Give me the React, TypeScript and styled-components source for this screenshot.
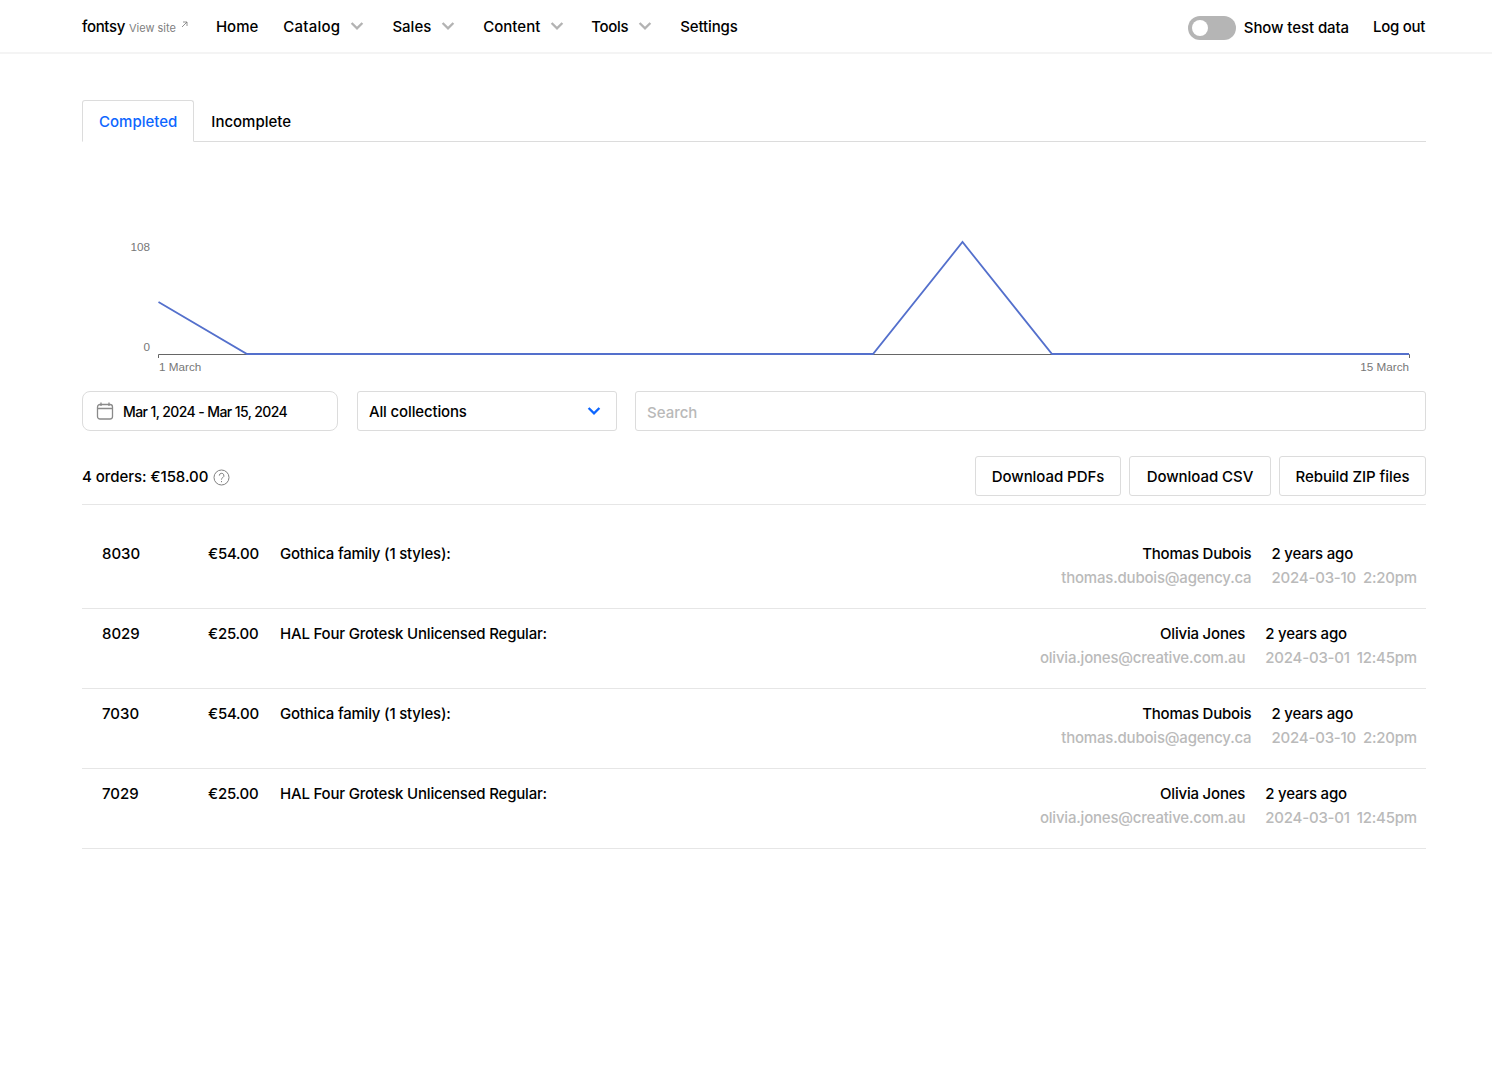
import React from "react";
import styled, { createGlobalStyle } from "styled-components";

const Global = createGlobalStyle`
  html, body { margin: 0; padding: 0; background: #fff; }
  body { font-family: "Inter", "Noto Sans", sans-serif; color: #000; font-size: 15px; font-weight: 500; }
  * { box-sizing: border-box; }
`;

const Header = styled.header`
  height: 54px;
  border-bottom: 2px solid #f4f4f4;
  padding: 0 67px 0 82px;
  display: flex;
  align-items: center;
  justify-content: space-between;
`;
const Nav = styled.nav`
  display: flex;
  align-items: center;
`;
const Brand = styled.span`
  display: flex;
  align-items: baseline;
  gap: 4px;
  margin-right: 28px;
  letter-spacing: -0.35px;
`;
const ViewSite = styled.span`
  font-size: 11px;
  font-weight: 400;
  color: #808080;
  letter-spacing: 0;
  display: inline-flex;
  gap: 5px;
`;
const NavItem = styled.span<{ $gap?: number; $ls?: number }>`
  display: flex;
  align-items: center;
  margin-right: ${(p) => p.$gap ?? 24}px;
  letter-spacing: ${(p) => p.$ls ?? 0}px;
  gap: 10px;
`;
const RightNav = styled.div`
  display: flex;
  align-items: center;
`;
const Toggle = styled.span`
  width: 48px;
  height: 24px;
  border-radius: 12px;
  background: #b5b5b5;
  padding: 4px;
  margin: 4px 8px 0 0;
  display: block;
`;
const Knob = styled.span`
  display: block;
  width: 16px;
  height: 16px;
  border-radius: 50%;
  background: #fff;
`;
const ToggleLabel = styled.span`
  margin: 2px 24px 0 0;
  letter-spacing: -0.08px;
`;
const LogOut = styled.span`
  letter-spacing: -0.3px;
`;
const Main = styled.main`
  padding: 46px 66px 0 82px;
`;
const Tabs = styled.div`
  display: flex;
  height: 42px;
  border-bottom: 1px solid #dcdcdc;
`;
const Tab = styled.div<{ $active?: boolean }>`
  height: 42px;
  padding: 0 16px;
  display: flex;
  align-items: center;
  border: 1px solid ${(p) => (p.$active ? "#dcdcdc" : "transparent")};
  border-bottom-color: ${(p) => (p.$active ? "#fff" : "transparent")};
  border-radius: 3px 3px 0 0;
  color: ${(p) => (p.$active ? "#0d66ff" : "#000")};
`;
const ChartSvg = styled.svg`
  display: block;
  width: 1344px;
  height: 249px;
`;
const AxisText = styled.text`
  font-family: "Liberation Sans", Arial, sans-serif;
  font-size: 11.7px;
  font-weight: 400;
  fill: #777;
`;
const Filters = styled.div`
  display: flex;
  height: 40px;
`;
const DateBox = styled.div`
  width: 256px;
  border: 1px solid #dcdcdc;
  border-radius: 8px;
  display: flex;
  align-items: center;
  padding-left: 13px;
  gap: 9px;
  font-size: 14px;
  margin-right: 19px;
  letter-spacing: -0.6px;
`;
const Select = styled.div`
  width: 260px;
  border: 1px solid #dcdcdc;
  border-radius: 3px;
  display: flex;
  align-items: center;
  justify-content: space-between;
  padding: 0 15px 0 11px;
  margin-right: 18px;
  letter-spacing: -0.15px;
`;
const SearchInput = styled.input`
  flex: 1;
  border: 1px solid #dcdcdc;
  border-radius: 3px;
  padding: 2px 11px 0;
  font: inherit;
  outline: none;
  &::placeholder { color: #b9b9b9; opacity: 1; }
`;
const Summary = styled.div`
  margin-top: 25px;
  height: 49px;
  border-bottom: 1px solid #e6e6e6;
  display: flex;
  justify-content: space-between;
`;
const Total = styled.div`
  display: flex;
  align-items: center;
  height: 40px;
  gap: 5px;
  letter-spacing: -0.05px;
`;
const HelpIcon = styled.svg`
  margin-top: 2px;
`;
const Buttons = styled.div`
  display: flex;
  gap: 8px;
`;
const Button = styled.button<{ $w: number }>`
  width: ${(p) => p.$w}px;
  height: 40px;
  padding: 0;
  background: #fff;
  border: 1px solid #dcdcdc;
  border-radius: 3px;
  font: inherit;
  letter-spacing: -0.05px;
  color: #000;
`;
const List = styled.div`
  padding-top: 24px;
`;
const Row = styled.div`
  height: 80px;
  border-bottom: 1px solid #e6e6e6;
  padding: 13px 9px 0 20px;
  display: flex;
  line-height: 24px;
  letter-spacing: -0.2px;
`;
const Id = styled.div`
  width: 106px;
  letter-spacing: 0;
`;
const Price = styled.div` width: 72px; `;
const Title = styled.div` flex: 1; `;
const Customer = styled.div`
  text-align: right;
  margin-right: 20px;
`;
const Muted = styled.div`
  color: #bababa;
`;
const Stamp = styled.span`
  word-spacing: 3px;
`;

const Chevron = ({ color = "#b3b3b3", w = 14 }: { color?: string; w?: number }) => (
  <svg width={w} height={w * 0.7} viewBox="0 0 14 10" fill="none">
    <path d="M1.5 2 7 7.5 12.5 2" stroke={color} strokeWidth="2.4" />
  </svg>
);

const orders = [
  ["8030", "€54.00", "Gothica family (1 styles):", "Thomas Dubois", "thomas.dubois@agency.ca", "2024-03-10 2:20pm"],
  ["8029", "€25.00", "HAL Four Grotesk Unlicensed Regular:", "Olivia Jones", "olivia.jones@creative.com.au", "2024-03-01 12:45pm"],
  ["7030", "€54.00", "Gothica family (1 styles):", "Thomas Dubois", "thomas.dubois@agency.ca", "2024-03-10 2:20pm"],
  ["7029", "€25.00", "HAL Four Grotesk Unlicensed Regular:", "Olivia Jones", "olivia.jones@creative.com.au", "2024-03-01 12:45pm"],
];

export default function App() {
  return (
    <>
      <Global />
      <Header>
        <Nav>
          <Brand>
            fontsy
            <ViewSite>
              View site
              <svg width="7" height="7" viewBox="0 0 7 7" fill="none">
                <path d="M1 6 6 1M2 1h4v4" stroke="#777" strokeWidth="0.8" />
              </svg>
            </ViewSite>
          </Brand>
          <NavItem $gap={25}>Home</NavItem>
          <NavItem $gap={28} $ls={0.25}>Catalog<Chevron /></NavItem>
          <NavItem $gap={28}>Sales<Chevron /></NavItem>
          <NavItem $gap={27}>Content<Chevron /></NavItem>
          <NavItem $gap={28} $ls={-0.35}>Tools<Chevron /></NavItem>
          <NavItem $ls={-0.1}>Settings</NavItem>
        </Nav>
        <RightNav>
          <Toggle><Knob /></Toggle>
          <ToggleLabel>Show test data</ToggleLabel>
          <LogOut>Log out</LogOut>
        </RightNav>
      </Header>
      <Main>
        <Tabs>
          <Tab $active>Completed</Tab>
          <Tab>Incomplete</Tab>
        </Tabs>
        <ChartSvg viewBox="82 142 1344 249">
          <AxisText x="150" y="251" textAnchor="end">108</AxisText>
          <AxisText x="150" y="351" textAnchor="end">0</AxisText>
          <AxisText x="159" y="371">1 March</AxisText>
          <AxisText x="1409" y="371" textAnchor="end">15 March</AxisText>
          <path d="M158.5 358V354.5H1409.5V358" fill="none" stroke="#666" strokeWidth="1" />
          <path d="M158.5 302 247 354H873L962.5 242 1052 354H1409" fill="none" stroke="#5470cc" strokeWidth="1.8" />
        </ChartSvg>
        <Filters>
          <DateBox>
            <svg width="18" height="18" viewBox="0 0 18 18" fill="none" stroke="#8a8a8a" strokeWidth="1.3">
              <rect x="1.5" y="2.5" width="15" height="14.5" rx="2.5" />
              <path d="M1.5 6.5h15M5 .5v3.5M13 .5v3.5" />
            </svg>
            Mar 1, 2024 - Mar 15, 2024
          </DateBox>
          <Select>
            All collections
            <Chevron color="#0d66ff" />
          </Select>
          <SearchInput placeholder="Search" readOnly />
        </Filters>
        <Summary>
          <Total>
            4 orders: €158.00
            <HelpIcon width="17" height="17" viewBox="0 0 17 17" fill="none" stroke="#808080" strokeWidth="1">
              <circle cx="8.5" cy="8.5" r="7.5" />
              <path d="M6.3 6.6a2.3 2.3 0 1 1 3.4 2c-.8.5-1.2 1-1.2 2" />
              <path d="M8.5 12v1.2" />
            </HelpIcon>
          </Total>
          <Buttons>
            <Button $w={146}>Download PDFs</Button>
            <Button $w={142}>Download CSV</Button>
            <Button $w={147}>Rebuild ZIP files</Button>
          </Buttons>
        </Summary>
        <List>
          {orders.map((o) => (
            <Row key={o[0]}>
              <Id>{o[0]}</Id>
              <Price>{o[1]}</Price>
              <Title>{o[2]}</Title>
              <Customer>
                <div>{o[3]}</div>
                <Muted>{o[4]}</Muted>
              </Customer>
              <div>
                <div>2 years ago</div>
                <Muted><Stamp>{o[5]}</Stamp></Muted>
              </div>
            </Row>
          ))}
        </List>
      </Main>
    </>
  );
}
